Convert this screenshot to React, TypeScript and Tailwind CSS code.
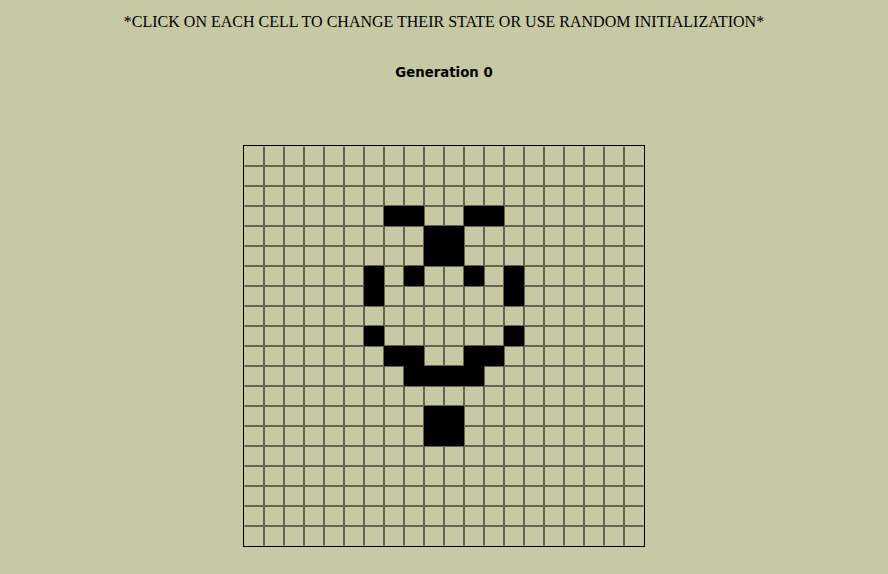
import { useState } from "react";

const SIZE = 20;

// initial pattern, [row, col]
const INITIAL_ALIVE: [number, number][] = [
  [3, 7], [3, 8], [3, 11], [3, 12],
  [4, 9], [4, 10], [5, 9], [5, 10],
  [6, 6], [6, 8], [6, 11], [6, 13],
  [7, 6], [7, 13],
  [9, 6], [9, 13],
  [10, 7], [10, 8], [10, 11], [10, 12],
  [11, 8], [11, 9], [11, 10], [11, 11],
  [13, 9], [13, 10], [14, 9], [14, 10],
];

const buildGrid = () => {
  const grid: boolean[][] = Array.from({ length: SIZE }, () => Array(SIZE).fill(false));
  INITIAL_ALIVE.forEach(([r, c]) => {
    grid[r][c] = true;
  });
  return grid;
};

export default function App() {
  const [grid, setGrid] = useState<boolean[][]>(buildGrid);
  const [generation] = useState(0);

  const toggleCell = (row: number, col: number) => {
    setGrid((prev) =>
      prev.map((cells, r) => (r === row ? cells.map((alive, c) => (c === col ? !alive : alive)) : cells)),
    );
  };

  return (
    <div className="min-h-screen bg-[#c6c9a4] flex flex-col items-center">
      <p className="pt-[12px] text-[16px] leading-[20px] text-black font-['Liberation_Serif',serif]">
        *CLICK ON EACH CELL TO CHANGE THEIR STATE OR USE RANDOM INITIALIZATION*
      </p>
      <h2 className="mt-[33px] text-[13.3px] leading-[16px] font-bold text-black font-['DejaVu_Sans',sans-serif]">
        Generation {generation}
      </h2>
      <div className="mt-[64px] grid grid-cols-[repeat(20,20px)] border border-black">
        {grid.map((cells, r) =>
          cells.map((alive, c) => (
            <div
              key={`${r}-${c}`}
              onClick={() => toggleCell(r, c)}
              className={`h-[20px] w-[20px] cursor-pointer border border-black/50 ${
                alive ? "bg-black" : "bg-transparent"
              } ${c === 0 ? "border-l-transparent" : ""} ${c === SIZE - 1 ? "border-r-transparent" : ""} ${
                r === 0 ? "border-t-transparent" : ""
              } ${r === SIZE - 1 ? "border-b-transparent" : ""}`}
            />
          )),
        )}
      </div>
    </div>
  );
}
